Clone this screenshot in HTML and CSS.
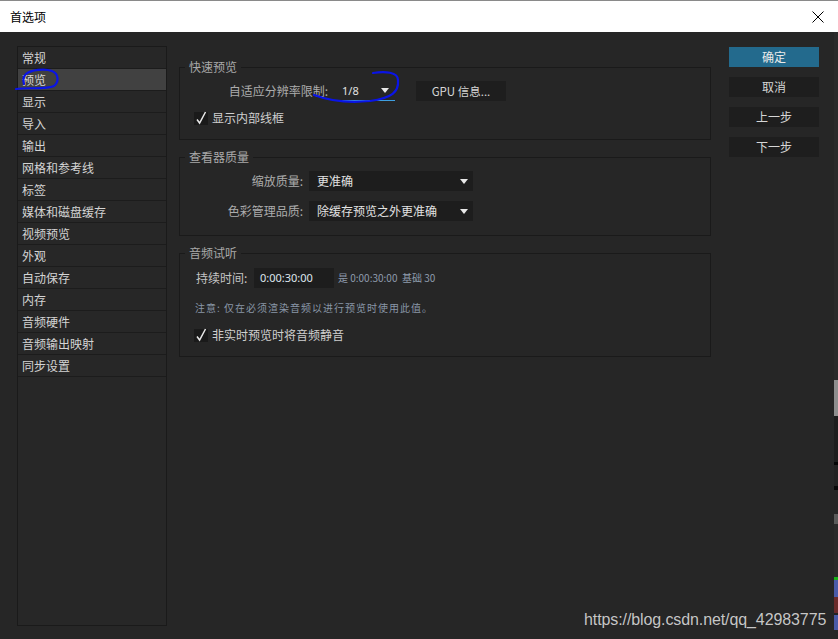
FILE: index.html
```html
<!DOCTYPE html>
<html lang="zh-CN">
<head>
<meta charset="utf-8">
<title>首选项</title>
<link rel="stylesheet" href="styles.css">
</head>
<body>
<div class="screen">
  <div class="dialog">
    <div class="titlebar">
      <span class="title">首选项</span>
      <svg class="close" width="12" height="12" viewBox="0 0 12 12"><path d="M0.5 0.5 L11.5 11.5 M11.5 0.5 L0.5 11.5" stroke="#000" stroke-width="1" fill="none"/></svg>
    </div>
    <div class="content">
      <ul class="nav">
        <li>常规</li>
        <li class="active">预览</li>
        <li>显示</li>
        <li>导入</li>
        <li>输出</li>
        <li>网格和参考线</li>
        <li>标签</li>
        <li>媒体和磁盘缓存</li>
        <li>视频预览</li>
        <li>外观</li>
        <li>自动保存</li>
        <li>内存</li>
        <li>音频硬件</li>
        <li>音频输出映射</li>
        <li>同步设置</li>
      </ul>
      <div class="panel">
        <fieldset class="group g1">
          <legend>快速预览</legend>
          <div class="row">
            <span class="lbl lbl-res">自适应分辨率限制:</span>
            <div class="select select-sm"><span>1/8</span><i class="caret"></i></div>
            <div class="btn btn-gpu">GPU 信息...</div>
          </div>
          <div class="check">
            <span class="box"><svg width="14" height="16" viewBox="0 0 14 16"><path d="M3 9.5 L5.6 13 L11.5 2" stroke="#e8e8e8" stroke-width="1.5" fill="none"/></svg></span>
            <span>显示内部线框</span>
          </div>
        </fieldset>
        <fieldset class="group g2">
          <legend>查看器质量</legend>
          <div class="row">
            <span class="lbl lbl-q">缩放质量:</span>
            <div class="select select-lg"><span>更准确</span><i class="caret"></i></div>
          </div>
          <div class="row row-gap">
            <span class="lbl lbl-q">色彩管理品质:</span>
            <div class="select select-lg"><span>除缓存预览之外更准确</span><i class="caret"></i></div>
          </div>
        </fieldset>
        <fieldset class="group g3">
          <legend>音频试听</legend>
          <div class="row row-dur">
            <span class="lbl-dur">持续时间:</span>
            <div class="input">0:00:30:00</div>
            <span class="meta">是 0:00:30:00&nbsp;&nbsp;基础 30</span>
          </div>
          <div class="note">注意: 仅在必须渲染音频以进行预览时使用此值。</div>
          <div class="check check-2">
            <span class="box"><svg width="14" height="16" viewBox="0 0 14 16"><path d="M3 9.5 L5.6 13 L11.5 2" stroke="#e8e8e8" stroke-width="1.5" fill="none"/></svg></span>
            <span>非实时预览时将音频静音</span>
          </div>
        </fieldset>
      </div>
      <div class="actions">
        <div class="btn btn-primary">确定</div>
        <div class="btn">取消</div>
        <div class="btn">上一步</div>
        <div class="btn">下一步</div>
      </div>
    </div>
  </div>
  <div class="edge"></div>
</div>
<svg class="ink" width="838" height="639" viewBox="0 0 838 639">
  <path d="M16 89 C28 87 45 90 54 86 C59 82 59 74 52 71 C44 68 31 70 26 74 C23 77 23 81 24 84" stroke="#0a14e6" stroke-width="2.2" fill="none" stroke-linecap="round"/>
  <path d="M373 73 C385 71 398 72 398 80 C399 92 392 98 370 101 C350 103 330 101 314 95" stroke="#0a14e6" stroke-width="2.2" fill="none" stroke-linecap="round"/>
</svg>
<div class="watermark">https://blog.csdn.net/qq_42983775</div>
</body>
</html>
```
FILE: styles.css
```css
* { box-sizing: border-box; }

html, body {
  margin: 0;
  padding: 0;
}

body {
  width: 838px;
  height: 639px;
  overflow: hidden;
  background: #262626;
  font-family: "Noto Sans CJK SC", "Noto Sans", sans-serif;
  font-size: 12px;
  line-height: 14px;
  color: #d2d2d2;
  position: relative;
}

.screen {
  display: flex;
  height: 639px;
}

.dialog {
  flex: 0 0 834px;
  display: flex;
  flex-direction: column;
  background: #262626;
}

.edge {
  flex: 0 0 4px;
  background: linear-gradient(to bottom,
    #8a8a8a 0, #8a8a8a 1px,
    #ffffff 1px, #ffffff 32px,
    #2a2a2a 32px, #2a2a2a 380px,
    #8e8e8e 380px, #8e8e8e 416px,
    #1d1d1d 416px, #1d1d1d 462px,
    #050505 462px, #050505 465px,
    #222 465px, #222 486px,
    #080808 486px, #080808 490px,
    #262626 490px, #262626 514px,
    #5a5a5a 514px, #5a5a5a 524px,
    #2a2a2a 524px, #2a2a2a 577px,
    #17b317 577px, #17b317 580px,
    #4a5aa8 580px, #4a5aa8 597px,
    #6a2a2a 597px, #6a2a2a 613px,
    #222 613px, #222 615px,
    #4a5aa8 615px, #4a5aa8 630px,
    #262626 630px);
}

/* Title bar */
.titlebar {
  height: 32px;
  background: #ffffff;
  border-top: 1px solid #8a8a8a;
  display: flex;
  align-items: center;
  justify-content: space-between;
  padding: 0 10px 0 10px;
}

.title {
  color: #000;
  font-size: 12px;
  line-height: 14px;
}

.close {
  display: block;
}

/* Content */
.content {
  flex: 1;
  display: flex;
  align-items: flex-start;
  padding: 14px 0 0 17px;
}

.nav {
  list-style: none;
  margin: 0;
  padding: 0;
  width: 150px;
  height: 580px;
  border: 1px solid #1a1a1a;
  background: #272727;
}

.nav li {
  height: 22px;
  line-height: 21px;
  padding-left: 4px;
  border-bottom: 1px solid #1c1c1c;
  color: #d4d4d4;
  white-space: nowrap;
}

.nav li.active {
  background: #414141;
}

/* Panel */
.panel {
  width: 532px;
  margin-left: 12px;
  padding-top: 14px;
  display: flex;
  flex-direction: column;
}

.group {
  margin: 0;
  padding: 7px 0 14px 0;
  border: 1px solid #1a1a1a;
  min-width: 0;
}

.group legend {
  margin-left: 5px;
  padding: 0 4px;
  line-height: 14px;
  font-size: 12px;
  color: #a9a9a9;
}

.g2, .g3 {
  margin-top: 10px;
}

.g3 {
  padding-top: 8px;
}

.row {
  display: flex;
  align-items: center;
  height: 20px;
}

.row-gap {
  margin-top: 10px;
}

.lbl {
  text-align: right;
  color: #acacac;
  white-space: nowrap;
}

.lbl-res { width: 148px; }
.lbl-q { width: 123px; }

.select {
  height: 20px;
  margin-left: 6px;
  display: flex;
  align-items: center;
  justify-content: space-between;
  color: #e2e2e2;
}

.select-sm {
  width: 61px;
  padding: 0 6px 0 8px;
  border-bottom: 1px solid #3f9fe0;
  font-family: "Noto Sans", sans-serif;
  font-size: 11px;
}

.select-lg {
  width: 164px;
  padding: 0 5px 0 8px;
  background: #1d1d1d;
}

.caret {
  width: 0;
  height: 0;
  border-left: 4.5px solid transparent;
  border-right: 4.5px solid transparent;
  border-top: 5px solid #e8e8e8;
}

.btn {
  height: 20px;
  line-height: 20px;
  text-align: center;
  background: #1e1e1e;
  color: #d6d6d6;
}

.btn-gpu {
  width: 90px;
  margin-left: 21px;
  font-size: 11.5px;
}

.check {
  display: flex;
  align-items: center;
  height: 14px;
  margin-top: 10px;
  padding-left: 14px;
  color: #cfcfcf;
}

.box {
  width: 14px;
  height: 13px;
  background: #1a1a1a;
  margin-right: 4px;
  position: relative;
}

.box svg {
  position: absolute;
  left: 0;
  top: -2px;
}

.row-dur {
  padding-left: 16px;
}

.lbl-dur {
  width: 58px;
  color: #c4c4c4;
}

.input {
  width: 80px;
  height: 20px;
  line-height: 20px;
  padding-left: 6px;
  background: #1d1d1d;
  color: #dde6ee;
  font-family: "Noto Sans", sans-serif;
  font-size: 11px;
}

.meta {
  margin-left: 4px;
  font-size: 10px;
  color: #8f9cad;
  white-space: nowrap;
}

.note {
  margin-top: 13px;
  padding-left: 15px;
  font-size: 10px;
  line-height: 14px;
  letter-spacing: 1px;
  color: #8996a7;
}

.check-2 {
  margin-top: 13px;
}

/* Right actions */
.actions {
  width: 90px;
  margin-left: 18px;
  margin-top: 1px;
  display: flex;
  flex-direction: column;
  gap: 10px;
}

.btn-primary {
  background: #236a8d;
  color: #eaeaea;
}

/* Overlays */
.ink {
  position: absolute;
  left: 0;
  top: 0;
  pointer-events: none;
}

.watermark {
  position: absolute;
  left: 584px;
  top: 611px;
  font-family: "Liberation Sans", Arial, sans-serif;
  font-size: 16px;
  line-height: 18px;
  color: rgba(222, 222, 222, 0.88);
  letter-spacing: -0.1px;
  white-space: nowrap;
}
```
